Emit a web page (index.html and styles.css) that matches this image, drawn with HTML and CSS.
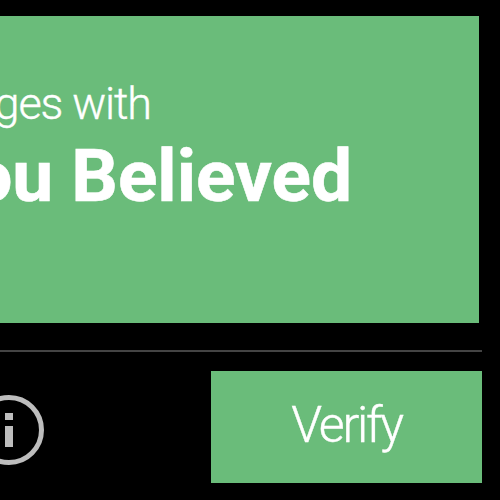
FILE: index.html
```html
<!DOCTYPE html>
<html lang="en">
<head>
<meta charset="utf-8">
<title>Verify</title>
<link rel="stylesheet" href="styles.css">
</head>
<body>
<main class="page">
  <section class="banner">
    <p class="line-light">ges with</p>
    <p class="line-bold">ou Believed</p>
  </section>
  <hr class="rule">
  <footer class="actions">
    <svg class="info" viewBox="0 0 70 70" aria-label="Information">
      <circle cx="35" cy="35" r="32.5" fill="none" stroke="#bdbdbd" stroke-width="5"/>
      <rect x="31" y="18" width="8" height="7" fill="#bdbdbd"/>
      <rect x="31" y="31" width="8" height="21" fill="#bdbdbd"/>
    </svg>
    <button class="verify">Verify</button>
  </footer>
</main>
</body>
</html>
```
FILE: styles.css
```css
html, body {
  margin: 0;
  height: 100%;
  background: #000;
}
.page {
  width: 500px;
  height: 500px;
  overflow: hidden;
  display: flex;
  flex-direction: column;
  padding-top: 16px;
  box-sizing: border-box;
  font-family: Roboto, sans-serif;
  color: #fff;
}
.banner {
  height: 307px;
  margin-right: 21px;
  background: #6abc7a;
  display: flex;
  flex-direction: column;
  align-items: flex-end;
  padding-top: 63px;
  box-sizing: border-box;
}
.banner p {
  margin: 0;
  white-space: nowrap;
}
.banner .line-light {
  font-size: 45px;
  font-weight: 300;
  letter-spacing: -1.1px;
  -webkit-text-stroke: 0.4px #fff;
  line-height: 50px;
  margin-right: 328px;
}
.banner .line-bold {
  font-size: 73px;
  font-weight: 700;
  -webkit-text-stroke: 0.6px #fff;
  line-height: 94px;
  margin-right: 127px;
}
.rule {
  margin: 27px 18px 0 0;
  height: 2px;
  border: 0;
  background: #444;
}
.actions {
  margin: 19px 18px 0 0;
  display: flex;
  justify-content: space-between;
  align-items: flex-start;
}
.info {
  width: 70px;
  height: 70px;
  margin: 24px 0 0 -26px;
  flex: none;
}
.verify {
  width: 271px;
  height: 112px;
  border: 0;
  padding: 0 0 4px;
  background: #6abc7a;
  color: #fff;
  font-family: Roboto, sans-serif;
  font-size: 50px;
  font-weight: 300;
  letter-spacing: -2.3px;
  -webkit-text-stroke: 0.4px #fff;
}
```
